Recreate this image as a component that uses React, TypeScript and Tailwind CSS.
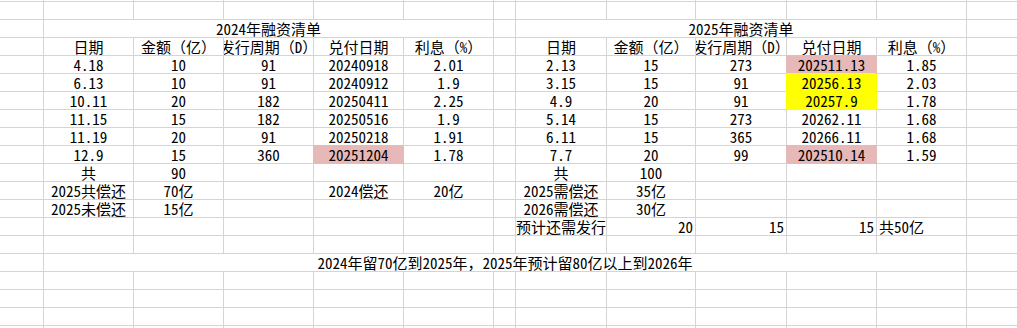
type Cell = {
  t?: string;
  span?: number;
  align?: 'left' | 'right' | 'center';
  fill?: 'pink' | 'yellow';
};

type Row = Record<number, Cell | string>;

const leftData = [
  ['4.18', '10', '91', '20240918', '2.01'],
  ['6.13', '10', '91', '20240912', '1.9'],
  ['10.11', '20', '182', '20250411', '2.25'],
  ['11.15', '15', '182', '20250516', '1.9'],
  ['11.19', '20', '91', '20250218', '1.91'],
  ['12.9', '15', '360', '20251204', '1.78'],
];

const rightData = [
  ['2.13', '15', '273', '202511.13', '1.85'],
  ['3.15', '15', '91', '20256.13', '2.03'],
  ['4.9', '20', '91', '20257.9', '1.78'],
  ['5.14', '15', '273', '20262.11', '1.68'],
  ['6.11', '15', '365', '20266.11', '1.68'],
  ['7.7', '20', '99', '202510.14', '1.59'],
];

// fills on the 兑付日期 column
const leftFill: (Cell['fill'] | undefined)[] = [undefined, undefined, undefined, undefined, undefined, 'pink'];
const rightFill: (Cell['fill'] | undefined)[] = ['pink', 'yellow', 'yellow', undefined, undefined, 'pink'];

const headers = ['日期', '金额（亿）', '发行周期（D）', '兑付日期', '利息（%）'];

function buildRows(): Row[] {
  const rows: Row[] = Array.from({ length: 20 }, () => ({}));
  rows[2] = {
    1: { t: '2024年融资清单', span: 5 },
    7: { t: '2025年融资清单', span: 5 },
  };
  headers.forEach((h, i) => {
    rows[3][1 + i] = h;
    rows[3][7 + i] = h;
  });
  leftData.forEach((r, ri) => {
    r.forEach((v, i) => {
      rows[4 + ri][1 + i] = i === 3 ? { t: v, fill: leftFill[ri] } : v;
    });
  });
  rightData.forEach((r, ri) => {
    r.forEach((v, i) => {
      rows[4 + ri][7 + i] = i === 3 ? { t: v, fill: rightFill[ri] } : v;
    });
  });
  rows[10] = { 1: '共', 2: '90', 7: '共', 8: '100' };
  rows[11] = { 1: '2025共偿还', 2: '70亿', 4: '2024偿还', 5: '20亿', 7: '2025需偿还', 8: '35亿' };
  rows[12] = { 1: '2025未偿还', 2: '15亿', 7: '2026需偿还', 8: '30亿' };
  rows[13] = {
    7: '预计还需发行',
    8: { t: '20', align: 'right' },
    9: { t: '15', align: 'right' },
    10: { t: '15', align: 'right' },
    11: { t: '共50亿', align: 'left' },
  };
  rows[15] = {
    1: { t: '2024年留70亿到2025年，2025年预计留80亿以上到2026年', span: 11 },
  };
  return rows;
}

const spanClass: Record<number, string> = {
  1: 'col-span-1',
  5: 'col-span-5',
  11: 'col-span-11',
};

const alignClass = {
  left: 'justify-start',
  right: 'justify-end',
  center: 'justify-center',
};

const fillClass = {
  pink: 'bg-[#e6b8b7] border-[#e6b8b7] shadow-[-1px_-1px_0_0_#e6b8b7]',
  yellow: 'bg-[#ffff00] border-[#ffff00] shadow-[-1px_-1px_0_0_#ffff00]',
};

function SheetRow({ row, height }: { row: Row; height: string }) {
  const cells = [];
  let c = 0;
  while (c < 13) {
    const raw = row[c];
    const cell: Cell = typeof raw === 'string' ? { t: raw } : raw ?? {};
    const span = cell.span ?? 1;
    const align = cell.align ?? 'center';
    cells.push(
      <div
        key={c}
        className={`${spanClass[span]} ${height} flex items-center overflow-hidden whitespace-nowrap px-[2px] border-r border-b ${
          cell.fill ? fillClass[cell.fill] : 'border-[#d4d4d4]'
        } ${alignClass[align]}`}
      >
        {cell.t}
      </div>,
    );
    c += span;
  }
  return (
    <div className="grid grid-cols-[44px_90px_90px_90px_90px_90px_22px_91px_89px_91px_90px_90px_51px]">
      {cells}
    </div>
  );
}

export default function App() {
  const rows = buildRows();
  return (
    <div className="w-[1017px] h-[328px] overflow-hidden bg-white text-black text-[15px] leading-[16px] font-[family-name:'Noto_Sans_Mono_CJK_SC','Noto_Sans_CJK_SC',monospace]">
      {rows.map((r, i) => (
        <SheetRow
          key={i}
          row={r}
          height={i === 0 ? 'h-[2px]' : i === 19 ? 'h-[3px]' : 'h-[18px]'}
        />
      ))}
    </div>
  );
}
